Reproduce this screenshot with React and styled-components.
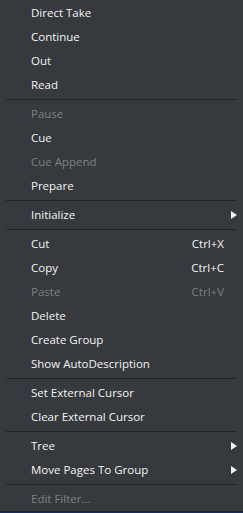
import React from "react";
import styled, { createGlobalStyle } from "styled-components";

const Global = createGlobalStyle`
  html, body { margin: 0; padding: 0; background: #1b2a55; }
  body { font-family: "Open Sans", "Noto Sans", sans-serif; }
`;

const Menu = styled.div`
  width: 243px;
  box-sizing: border-box;
  padding-top: 1px;
  background: #36393d;
  border-bottom: 1px solid #222427;
  display: flex;
  flex-direction: column;
`;

const Item = styled.div`
  box-sizing: border-box;
  display: flex;
  align-items: center;
  height: 24px;
  padding-left: 31px;
  padding-bottom: 2px;
  font-size: 11.5px;
  color: ${(p) => (p.$disabled ? "#7e8185" : "#f4f4f4")};
  white-space: nowrap;
`;

const Label = styled.span`
  flex: 1;
`;

const Shortcut = styled.span`
  margin-right: 19px;
`;

const Arrow = styled.svg`
  width: 6px;
  height: 8px;
  margin-right: 6px;
  margin-top: 2px;
  fill: #f4f4f4;
`;

const Separator = styled.div`
  height: 1px;
  margin: 2px 6px 2px 6px;
  background: #232528;
`;

const groups = [
  [
    { label: "Direct Take" },
    { label: "Continue" },
    { label: "Out" },
    { label: "Read" },
  ],
  [
    { label: "Pause", disabled: true },
    { label: "Cue" },
    { label: "Cue Append", disabled: true },
    { label: "Prepare" },
  ],
  [{ label: "Initialize", sub: true }],
  [
    { label: "Cut", shortcut: "Ctrl+X" },
    { label: "Copy", shortcut: "Ctrl+C" },
    { label: "Paste", shortcut: "Ctrl+V", disabled: true },
    { label: "Delete" },
    { label: "Create Group" },
    { label: "Show AutoDescription" },
  ],
  [{ label: "Set External Cursor" }, { label: "Clear External Cursor" }],
  [{ label: "Tree", sub: true }, { label: "Move Pages To Group", sub: true }],
  [{ label: "Edit Filter...", disabled: true }],
];

export default function App() {
  return (
    <>
      <Global />
      <Menu>
        {groups.map((g, gi) => (
          <React.Fragment key={gi}>
            {gi > 0 && <Separator />}
            {g.map((it) => (
              <Item key={it.label} $disabled={it.disabled}>
                <Label>{it.label}</Label>
                {it.shortcut && <Shortcut>{it.shortcut}</Shortcut>}
                {it.sub && (
                  <Arrow viewBox="0 0 6 8">
                    <polygon points="0,0 6,4 0,8" />
                  </Arrow>
                )}
              </Item>
            ))}
          </React.Fragment>
        ))}
      </Menu>
    </>
  );
}
